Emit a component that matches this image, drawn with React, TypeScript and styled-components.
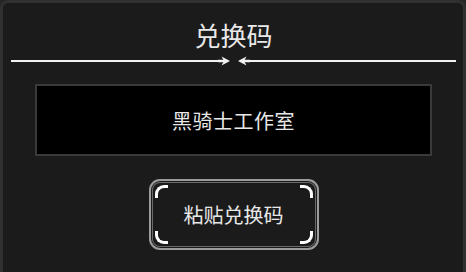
import React from "react";
import styled, { createGlobalStyle, css } from "styled-components";

const GlobalStyle = createGlobalStyle`
  html, body {
    margin: 0;
    padding: 0;
    background: #262626;
    overflow: hidden;
  }
  * {
    box-sizing: border-box;
  }
`;

const Panel = styled.div`
  width: 466px;
  height: 272px;
  border: 3px solid #303030;
  border-bottom: 0;
  border-radius: 8px 8px 0 0;
  background: #1b1b1b;
  padding: 17px 7px 0 8px;
  display: flex;
  flex-direction: column;
  align-items: center;
  font-family: "Noto Sans CJK SC", "Noto Sans", sans-serif;
  color: #e8e8e8;
`;

const Title = styled.h1`
  margin: 0;
  font-size: 26px;
  font-weight: 400;
  line-height: 30px;
  height: 30px;
`;

const Divider = styled.div`
  width: 100%;
  margin-top: 6px;
  display: flex;
  align-items: center;
`;

const Rule = styled.div`
  flex: 1;
  height: 2px;
  background: #f2f2f2;
`;

const ArrowGap = styled.div`
  width: 8px;
`;

const CodeBox = styled.div`
  margin-top: 18px;
  width: 397px;
  height: 72px;
  border: 2px solid #3a3a3a;
  background: #000;
  display: flex;
  align-items: center;
  justify-content: center;
  font-size: 20px;
  letter-spacing: 0.5px;
`;

const PasteButton = styled.button`
  position: relative;
  margin-top: 23px;
  width: 170px;
  height: 71px;
  border: 2px solid #9c9c9c;
  border-radius: 11px;
  background: #1b1b1b;
  box-shadow: inset 0 0 0 1px #1b1b1b, inset 0 0 0 2px #6a6a6a;
  color: #e8e8e8;
  font-family: "Noto Sans CJK SC", "Noto Sans", sans-serif;
  font-size: 20px;
  display: flex;
  align-items: center;
  justify-content: center;
  padding: 0;
  cursor: pointer;
`;

type Place = "tl" | "tr" | "bl" | "br";

const Corner = styled.span<{ $at: Place }>`
  position: absolute;
  width: 13px;
  height: 13px;
  border: 0 solid #ffffff;
  ${({ $at }) =>
    $at === "tl" &&
    css`
      top: 4px;
      left: 4px;
      border-top-width: 3px;
      border-left-width: 3px;
      border-top-left-radius: 9px;
    `}
  ${({ $at }) =>
    $at === "tr" &&
    css`
      top: 4px;
      right: 4px;
      border-top-width: 3px;
      border-right-width: 3px;
      border-top-right-radius: 9px;
    `}
  ${({ $at }) =>
    $at === "bl" &&
    css`
      bottom: 4px;
      left: 4px;
      border-bottom-width: 3px;
      border-left-width: 3px;
      border-bottom-left-radius: 9px;
    `}
  ${({ $at }) =>
    $at === "br" &&
    css`
      bottom: 4px;
      right: 4px;
      border-bottom-width: 3px;
      border-right-width: 3px;
      border-bottom-right-radius: 9px;
    `}
`;

const Arrow = ({ flip }: { flip?: boolean }) => (
  <svg
    width="12"
    height="10"
    viewBox="0 0 12 10"
    style={flip ? { transform: "scaleX(-1)" } : undefined}
  >
    <rect x="0" y="3.75" width="7" height="2.5" fill="#f2f2f2" />
    <path d="M3.5 0.5 L12 5 L3.5 9.5 L6 5 Z" fill="#f2f2f2" />
  </svg>
);

export default function App() {
  return (
    <>
      <GlobalStyle />
      <Panel>
        <Title>兑换码</Title>
        <Divider>
          <Rule />
          <Arrow />
          <ArrowGap />
          <Arrow flip />
          <Rule />
        </Divider>
        <CodeBox>黑骑士工作室</CodeBox>
        <PasteButton>
          <Corner $at="tl" />
          <Corner $at="tr" />
          <Corner $at="bl" />
          <Corner $at="br" />
          粘贴兑换码
        </PasteButton>
      </Panel>
    </>
  );
}
